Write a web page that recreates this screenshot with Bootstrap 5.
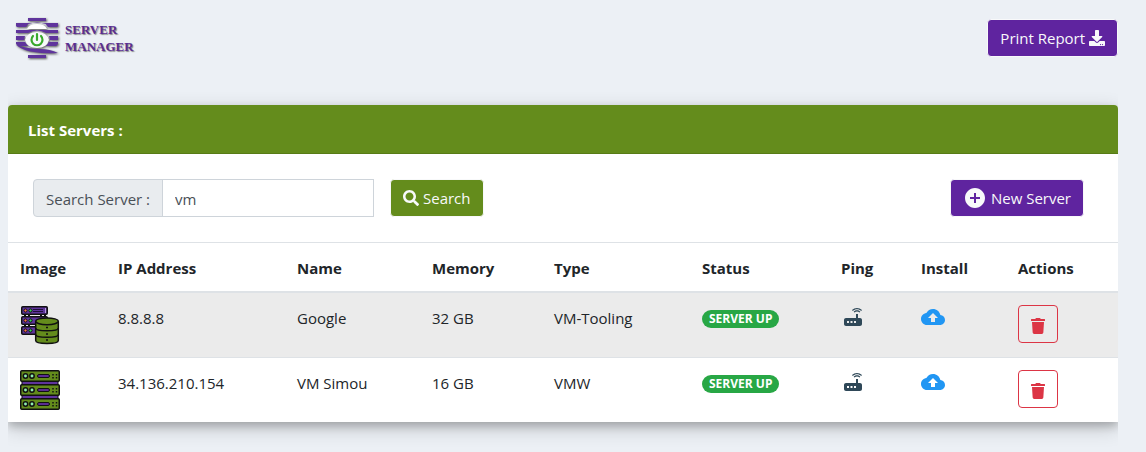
<!DOCTYPE html>
<html lang="en">
<head>
<meta charset="utf-8">
<meta name="viewport" content="width=device-width, initial-scale=1">
<title>Server Manager</title>
<link rel="stylesheet" href="https://cdn.jsdelivr.net/npm/bootstrap@5.3.0/dist/css/bootstrap.min.css">
<style>
  body { background: #ecf0f5; color: #212529; font-family: "Open Sans", "Noto Sans", sans-serif; font-size: 15px; line-height: 24px; }
  .page-shell { padding: 17px 28px 40px 8px; }
  .brand { color: #5a2d91; font: bold 13px/17px "Liberation Serif", serif; text-shadow: 1px 1px 1px #888; gap: 5px; padding-left: 6px; }
  .brand svg { filter: drop-shadow(1px 1px 1px #555); }
  .btn { --bs-btn-font-size: 15px; --bs-btn-line-height: 24px; --bs-btn-border-radius: 4px; height: 38px; white-space: nowrap; }
  .btn-violet, .btn-violet:hover { background: #5f249f; border-color: #f8f9fa; color: #f8f9fa; }
  .btn-leaf, .btn-leaf:hover { background: #648c1c; border-color: #f8f9fa; color: #f8f9fa; }
  .btn-outline-danger { --bs-btn-color: #dc3545; --bs-btn-border-color: #dc3545; }
  .btn-outline-danger svg { display: block; margin-top: 3px; }
  .panel-clip { margin-top: 46px; clip-path: inset(-30px 0 -50px 0); }
  .server-panel { border: 0; border-radius: 4px 4px 0 0; box-shadow: 0 4px 8px rgba(0,0,0,.2), 0 6px 20px rgba(0,0,0,.19); }
  .server-panel > .card-header { background: #648c1c; border-bottom: 1px solid #577b16; border-radius: 4px 4px 0 0; padding: 13px 20px 11px; color: #fff; font-weight: 700; }
  .toolbar { padding: 25px 34px 25px 25px; }
  .search-box { width: 341px; height: 38px; }
  .search-box .input-group-text { background: #e9ecef; border-color: #ced4da; border-radius: 4px; color: #495057; font-size: 15px; padding: 7px 12px 5px; }
  .search-box .form-control { border-color: #ced4da; border-radius: 0; color: #495057; font-size: 15px; padding: 7px 12px 5px; }
  .server-table { table-layout: fixed; min-width: 960px; margin: 0; color: #212529; }
  .server-table th, .server-table td { padding: 12px; vertical-align: top; border: 0; border-top: 1px solid #dee2e6; box-shadow: none; background: #fff; }
  .server-table th { border-bottom: 2px solid #dee2e6; padding: 13px 12px 11px; }
  .server-table .cell-text { padding: 13px 12px 11px; }
  .server-table tbody tr:first-child td { border-top: 0; }
  .server-table tbody tr:nth-child(odd) td { background: #ebebeb; }
  .server-table svg { display: block; }
  .status-pill { background: #28a745; font-size: 12px; line-height: 12px; padding: 3px 7px; }
  .c-image { width: 98px; } .c-ip { width: 179px; } .c-name { width: 135px; }
  .c-memory { width: 122px; } .c-type { width: 148px; } .c-status { width: 139px; }
  .c-ping { width: 80px; } .c-install { width: 97px; } .c-actions { width: 112px; }
</style>
</head>
<body>
<svg class="d-none" aria-hidden="true">
  <symbol id="i-router" viewBox="0 0 24 24"><path fill="#2f4858" d="M20.2 5.9l.8-.8C19.6 3.7 17.8 3 16 3s-3.6.7-5 2.1l.8.8C13 4.8 14.5 4.2 16 4.2s3 .6 4.2 1.7zm-.9.8c-.9-.9-2.1-1.4-3.3-1.4s-2.4.5-3.3 1.4l.8.8c.7-.7 1.6-1 2.5-1 .9 0 1.8.3 2.5 1l.8-.8zM19 13h-2V9h-2v4H5c-1.1 0-2 .9-2 2v4c0 1.1.9 2 2 2h14c1.1 0 2-.9 2-2v-4c0-1.1-.9-2-2-2zM8 18H6v-2h2v2zm3.5 0h-2v-2h2v2zm3.5 0h-2v-2h2v2z"/></symbol>
  <symbol id="i-cloud" viewBox="0 0 24 24"><path fill="#2196f3" d="M19.35 10.04C18.67 6.59 15.64 4 12 4 9.11 4 6.6 5.64 5.35 8.04 2.34 8.36 0 10.91 0 14c0 3.31 2.69 6 6 6h13c2.76 0 5-2.24 5-5 0-2.64-2.05-4.78-4.65-4.96zM14 13v4h-4v-4H7l5-5 5 5h-3z"/></symbol>
  <symbol id="i-trash" viewBox="0 0 448 512"><path fill="currentColor" d="M432 32H312l-9.4-18.7A24 24 0 0 0 281.1 0H166.8a23.72 23.72 0 0 0-21.4 13.3L136 32H16A16 16 0 0 0 0 48v32a16 16 0 0 0 16 16h416a16 16 0 0 0 16-16V48a16 16 0 0 0-16-16zM53.2 467a48 48 0 0 0 47.9 45h245.8a48 48 0 0 0 47.9-45L416 128H32z"/></symbol>
</svg>

<div class="page-shell">
  <header class="d-flex justify-content-between align-items-center">
    <a href="#" class="brand d-flex align-items-center text-decoration-none">
      <svg width="46" height="42" viewBox="0 0 46 42" aria-hidden="true">
        <g fill="#5f349c">
          <rect x="14" y="1" width="18" height="3"/>
          <path d="M2 6h13l-3 4H3L2 9zM31 6h13v3l-1 1h-9zM15 6h16l1 1q-9-3-18 0z"/>
          <path d="M2 13h42v3H32q-9-5-18 0H2zM2 19h9l-1 4H2zM35 19h9v4h-8zM2 25h9l3 4H4l-2-2zM35 25h9v2l-2 2H32z"/>
          <path d="M2 28q13 4 24 4 10 0 18 4-13 1-24-1Q10 34 2 28z"/>
          <rect x="14" y="38" width="18" height="3"/>
        </g>
        <path d="M13 12q2-5 10-5t10 5z" fill="#fff"/>
        <path d="M11 23q2-8 12-8t12 8q-2 8-12 8t-12-8z" fill="#f8f9fb"/>
        <path d="M19 19a5.5 5.5 0 1 0 8 0M23 17v6" fill="none" stroke="#39a92c" stroke-width="2.2" stroke-linecap="round"/>
      </svg>
      <span>SERVER<br>MANAGER</span>
    </a>
    <button type="button" class="btn btn-violet">Print Report
      <svg width="16" height="16" viewBox="0 0 512 512" class="align-middle mb-1" fill="currentColor" aria-hidden="true"><path d="M216 0h80c13.3 0 24 10.7 24 24v168h87.7c17.8 0 26.7 21.5 14.1 34.1L269.7 378.3c-7.5 7.5-19.8 7.5-27.3 0L90.1 226.1c-12.6-12.6-3.7-34.1 14.1-34.1H192V24c0-13.3 10.7-24 24-24zm296 376v112c0 13.3-10.7 24-24 24H24c-13.3 0-24-10.7-24-24V376c0-13.3 10.7-24 24-24h146.7l49 49c20.1 20.1 52.5 20.1 72.6 0l49-49H488c13.3 0 24 10.7 24 24zm-124 88c0-11-9-20-20-20s-20 9-20 20 9 20 20 20 20-9 20-20zm64 0c0-11-9-20-20-20s-20 9-20 20 9 20 20 20 20-9 20-20z"/></svg>
    </button>
  </header>

  <main class="panel-clip">
    <div class="card server-panel">
      <div class="card-header">List Servers :</div>
      <div class="toolbar d-flex flex-wrap gap-3 bg-white">
        <div class="input-group flex-nowrap search-box">
          <label class="input-group-text" for="query">Search Server :</label>
          <input type="text" class="form-control" id="query" value="vm">
        </div>
        <button type="button" class="btn btn-leaf d-flex align-items-center gap-1">
          <svg width="16" height="16" viewBox="0 0 512 512" fill="currentColor" aria-hidden="true"><path d="M505 442.7L405.3 343c-4.5-4.5-10.6-7-17-7H372c27.6-35.3 44-79.7 44-128C416 93.1 322.9 0 208 0S0 93.1 0 208s93.1 208 208 208c48.3 0 92.7-16.4 128-44v16.3c0 6.4 2.5 12.5 7 17l99.7 99.7c9.4 9.4 24.6 9.4 33.9 0l28.3-28.3c9.4-9.4 9.4-24.6.1-34zM208 336c-70.7 0-128-57.2-128-128 0-70.7 57.2-128 128-128 70.7 0 128 57.2 128 128 0 70.7-57.2 128-128 128z"/></svg>
          Search
        </button>
        <button type="button" class="btn btn-violet d-flex align-items-center gap-1 ms-auto">
          <svg width="24" height="24" viewBox="0 0 24 24" fill="currentColor" aria-hidden="true"><path d="M12 2C6.48 2 2 6.48 2 12s4.48 10 10 10 10-4.48 10-10S17.52 2 12 2zm5 11h-4v4h-2v-4H7v-2h4V7h2v4h4v2z"/></svg>
          New Server
        </button>
      </div>
      <table class="table server-table">
        <thead>
          <tr>
            <th scope="col" class="c-image">Image</th>
            <th scope="col" class="c-ip">IP Address</th>
            <th scope="col" class="c-name">Name</th>
            <th scope="col" class="c-memory">Memory</th>
            <th scope="col" class="c-type">Type</th>
            <th scope="col" class="c-status">Status</th>
            <th scope="col" class="c-ping">Ping</th>
            <th scope="col" class="c-install">Install</th>
            <th scope="col" class="c-actions">Actions</th>
          </tr>
        </thead>
        <tbody>
          <tr>
            <td>
              <svg width="40" height="40" viewBox="0 0 40 40" role="img" aria-label="Database server">
                <path d="M5 9v14M9 9v14M21 9v4M25 9v4" stroke="#111" stroke-width="2"/>
                <g fill="#5f349c" stroke="#111" stroke-width="1.5">
                  <rect x="1.75" y="1.75" width="25.5" height="7.5" rx="1"/>
                  <rect x="1.75" y="11.75" width="25.5" height="7.5" rx="1"/>
                  <rect x="1.75" y="21.75" width="25.5" height="7.5" rx="1"/>
                </g>
                <path d="M13 4.5h10M13 6.5h10" stroke="#21103a"/>
                <path d="M25.5 3v5" stroke="#b79be0"/>
                <g stroke="#111"><g fill="#ff7043"><circle cx="5.5" cy="5.5" r="1.6"/><circle cx="5.5" cy="15.5" r="1.6"/><circle cx="5.5" cy="25.5" r="1.6"/></g>
                <g fill="#35d957"><circle cx="10.5" cy="5.5" r="1.6"/><circle cx="10.5" cy="15.5" r="1.6"/><circle cx="10.5" cy="25.5" r="1.6"/></g></g>
                <path d="M15.7 16.5v19c0 4 22.6 4 22.6 0v-19" fill="#648c1c" stroke="#111" stroke-width="1.5"/>
                <ellipse cx="27" cy="16.3" rx="11.3" ry="3.4" fill="#648c1c" stroke="#111" stroke-width="1.5"/>
                <path d="M15.7 23c0 3.8 22.6 3.8 22.6 0M15.7 29.5c0 3.8 22.6 3.8 22.6 0" fill="none" stroke="#111" stroke-width="1.5"/>
                <path d="M26 22.5h2M26 29h2M26 35h2" stroke="#111" stroke-width="1.5"/>
              </svg>
            </td>
            <td class="cell-text">8.8.8.8</td>
            <td class="cell-text">Google</td>
            <td class="cell-text">32 GB</td>
            <td class="cell-text">VM-Tooling</td>
            <td><span class="badge rounded-pill status-pill">SERVER UP</span></td>
            <td><a href="#" class="d-inline-block" aria-label="Ping Google"><svg width="24" height="24"><use href="#i-router"/></svg></a></td>
            <td><a href="#" class="d-inline-block" aria-label="Install on Google"><svg width="24" height="24"><use href="#i-cloud"/></svg></a></td>
            <td><button type="button" class="btn btn-outline-danger" aria-label="Delete Google"><svg width="14" height="16"><use href="#i-trash"/></svg></button></td>
          </tr>
          <tr>
            <td>
              <svg width="40" height="40" viewBox="0 0 40 40" role="img" aria-label="Rack server">
                <path d="M2 11h36v4H2zM2 25h36v4H2z" fill="#5f349c" stroke="#111"/>
                <g fill="#648c1c" stroke="#111" stroke-width="1.5">
                  <rect x=".75" y=".75" width="38.5" height="10.5" rx="1"/>
                  <rect x=".75" y="14.75" width="38.5" height="10.5" rx="1"/>
                  <rect x=".75" y="28.75" width="38.5" height="10.5" rx="1"/>
                </g>
                <g fill="#8ff0b0" stroke="#111" stroke-width="1.5">
                  <circle cx="5.5" cy="6" r="2.2"/><circle cx="12" cy="6" r="2.2"/>
                  <circle cx="5.5" cy="20" r="2.2"/><circle cx="12" cy="20" r="2.2"/>
                  <circle cx="5.5" cy="34" r="2.2"/><circle cx="12" cy="34" r="2.2"/>
                </g>
                <g fill="#5a2d91" stroke="#111"><rect x="17.5" y="4.5" width="12" height="3" rx="1.5"/><rect x="17.5" y="18.5" width="12" height="3" rx="1.5"/><rect x="17.5" y="32.5" width="12" height="3" rx="1.5"/></g>
                <path d="M33 4v5M36.5 4v5M33 18v5M36.5 18v5M33 32v5M36.5 32v5" stroke="#111" stroke-width="1.5" stroke-dasharray="1.5 1.5"/>
              </svg>
            </td>
            <td class="cell-text">34.136.210.154</td>
            <td class="cell-text">VM Simou</td>
            <td class="cell-text">16 GB</td>
            <td class="cell-text">VMW</td>
            <td><span class="badge rounded-pill status-pill">SERVER UP</span></td>
            <td><a href="#" class="d-inline-block" aria-label="Ping VM Simou"><svg width="24" height="24"><use href="#i-router"/></svg></a></td>
            <td><a href="#" class="d-inline-block" aria-label="Install on VM Simou"><svg width="24" height="24"><use href="#i-cloud"/></svg></a></td>
            <td><button type="button" class="btn btn-outline-danger" aria-label="Delete VM Simou"><svg width="14" height="16"><use href="#i-trash"/></svg></button></td>
          </tr>
        </tbody>
      </table>
    </div>
  </main>
</div>
<script src="https://cdn.jsdelivr.net/npm/bootstrap@5.3.0/dist/js/bootstrap.bundle.min.js"></script>
</body>
</html>
